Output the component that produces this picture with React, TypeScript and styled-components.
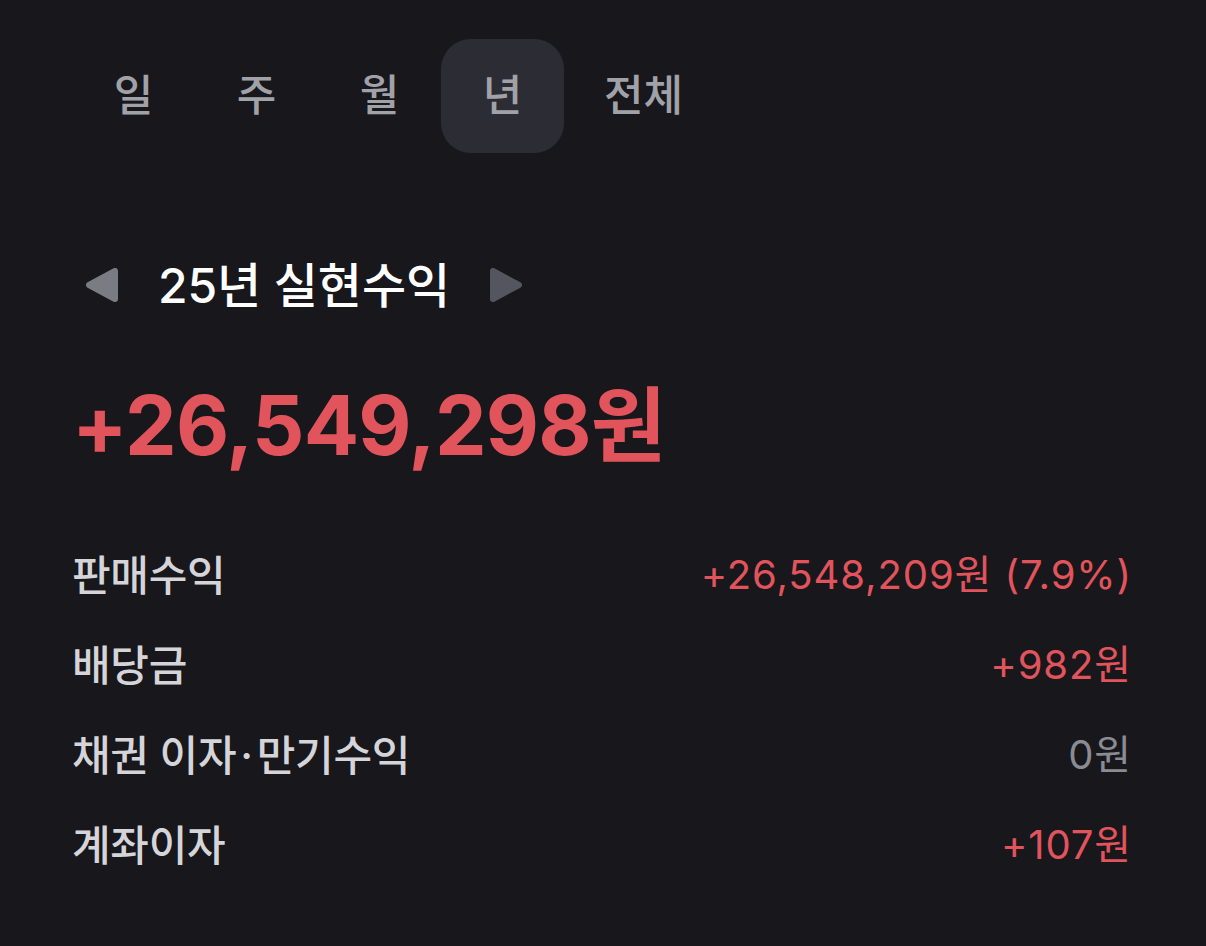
import React, { useState } from 'react';
import styled, { createGlobalStyle } from 'styled-components';

const GlobalStyle = createGlobalStyle`
  body {
    margin: 0;
    background: #17171c;
  }
`;

const Page = styled.div`
  min-height: 946px;
  box-sizing: border-box;
  padding: 39px 74px 0 72px;
  background: #17171c;
  font-family: 'Inter', 'Noto Sans CJK KR', sans-serif;
`;

const TabBar = styled.div`
  display: flex;
  height: 114px;
`;

const Tab = styled.button<{ $active?: boolean }>`
  display: flex;
  align-items: center;
  justify-content: center;
  min-width: 123px;
  padding: 0 40px 8px;
  border: 0;
  border-radius: 30px;
  background: ${({ $active }) => ($active ? '#2c2c35' : 'transparent')};
  color: #a1a1a8;
  font-family: inherit;
  font-size: 43px;
  font-weight: 500;
  cursor: pointer;
`;

const PeriodNav = styled.div`
  display: flex;
  align-items: center;
  gap: 40px;
  height: 60px;
  margin-top: 99px;
  padding-left: 14px;
`;

const ArrowButton = styled.button`
  display: flex;
  margin-top: 6px;
  padding: 0;
  border: 0;
  background: none;
  cursor: pointer;
`;

const PeriodTitle = styled.h2`
  margin: 0;
  color: #ffffff;
  font-size: 48px;
  font-weight: 500;
  letter-spacing: -0.1px;
`;

const Amount = styled.div`
  display: flex;
  align-items: center;
  height: 100px;
  margin-top: 57px;
  color: #e2545c;
  font-size: 82px;
  font-weight: 700;
  letter-spacing: -0.8px;
`;

const List = styled.div`
  margin-top: 58px;
`;

const Row = styled.div`
  display: flex;
  align-items: center;
  justify-content: space-between;
  height: 90px;
`;

const Label = styled.span`
  color: #d4d4d9;
  font-size: 42px;
  font-weight: 500;
  letter-spacing: -0.3px;
`;

const Dot = styled.span`
  margin: 0 4px;
`;

const Value = styled.span<{ $tone: 'plus' | 'zero' }>`
  color: ${({ $tone }) => ($tone === 'plus' ? '#e2545c' : '#8b8b93')};
  font-size: 40px;
  font-weight: 400;
  letter-spacing: 0.9px;
`;

const Triangle = ({ dir, color }: { dir: 'left' | 'right'; color: string }) => (
  <svg width="32" height="34" viewBox="0 0 32 34">
    <polygon
      points={dir === 'left' ? '29,3 29,31 3,17' : '3,3 3,31 29,17'}
      fill={color}
      stroke={color}
      strokeWidth="6"
      strokeLinejoin="round"
    />
  </svg>
);

const tabs = ['일', '주', '월', '년', '전체'];

const rows = [
  { label: ['판매수익'], value: '+26,548,209원 (7.9%)', tone: 'plus' as const },
  { label: ['배당금'], value: '+982원', tone: 'plus' as const },
  { label: ['채권 이자', '만기수익'], value: '0원', tone: 'zero' as const },
  { label: ['계좌이자'], value: '+107원', tone: 'plus' as const }
];

export default function App() {
  const [active, setActive] = useState('년');

  return (
    <Page>
      <GlobalStyle />
      <TabBar>
        {tabs.map(t => (
          <Tab key={t} $active={t === active} onClick={() => setActive(t)}>
            {t}
          </Tab>
        ))}
      </TabBar>

      <PeriodNav>
        <ArrowButton aria-label="이전">
          <Triangle dir="left" color="#7b7b84" />
        </ArrowButton>
        <PeriodTitle>25년 실현수익</PeriodTitle>
        <ArrowButton aria-label="다음">
          <Triangle dir="right" color="#55555f" />
        </ArrowButton>
      </PeriodNav>

      <Amount>+26,549,298원</Amount>

      <List>
        {rows.map(r => (
          <Row key={r.label.join()}>
            <Label>
              {r.label.map((part, i) => (
                <React.Fragment key={part}>
                  {i > 0 && <Dot>·</Dot>}
                  {part}
                </React.Fragment>
              ))}
            </Label>
            <Value $tone={r.tone}>{r.value}</Value>
          </Row>
        ))}
      </List>
    </Page>
  );
}
